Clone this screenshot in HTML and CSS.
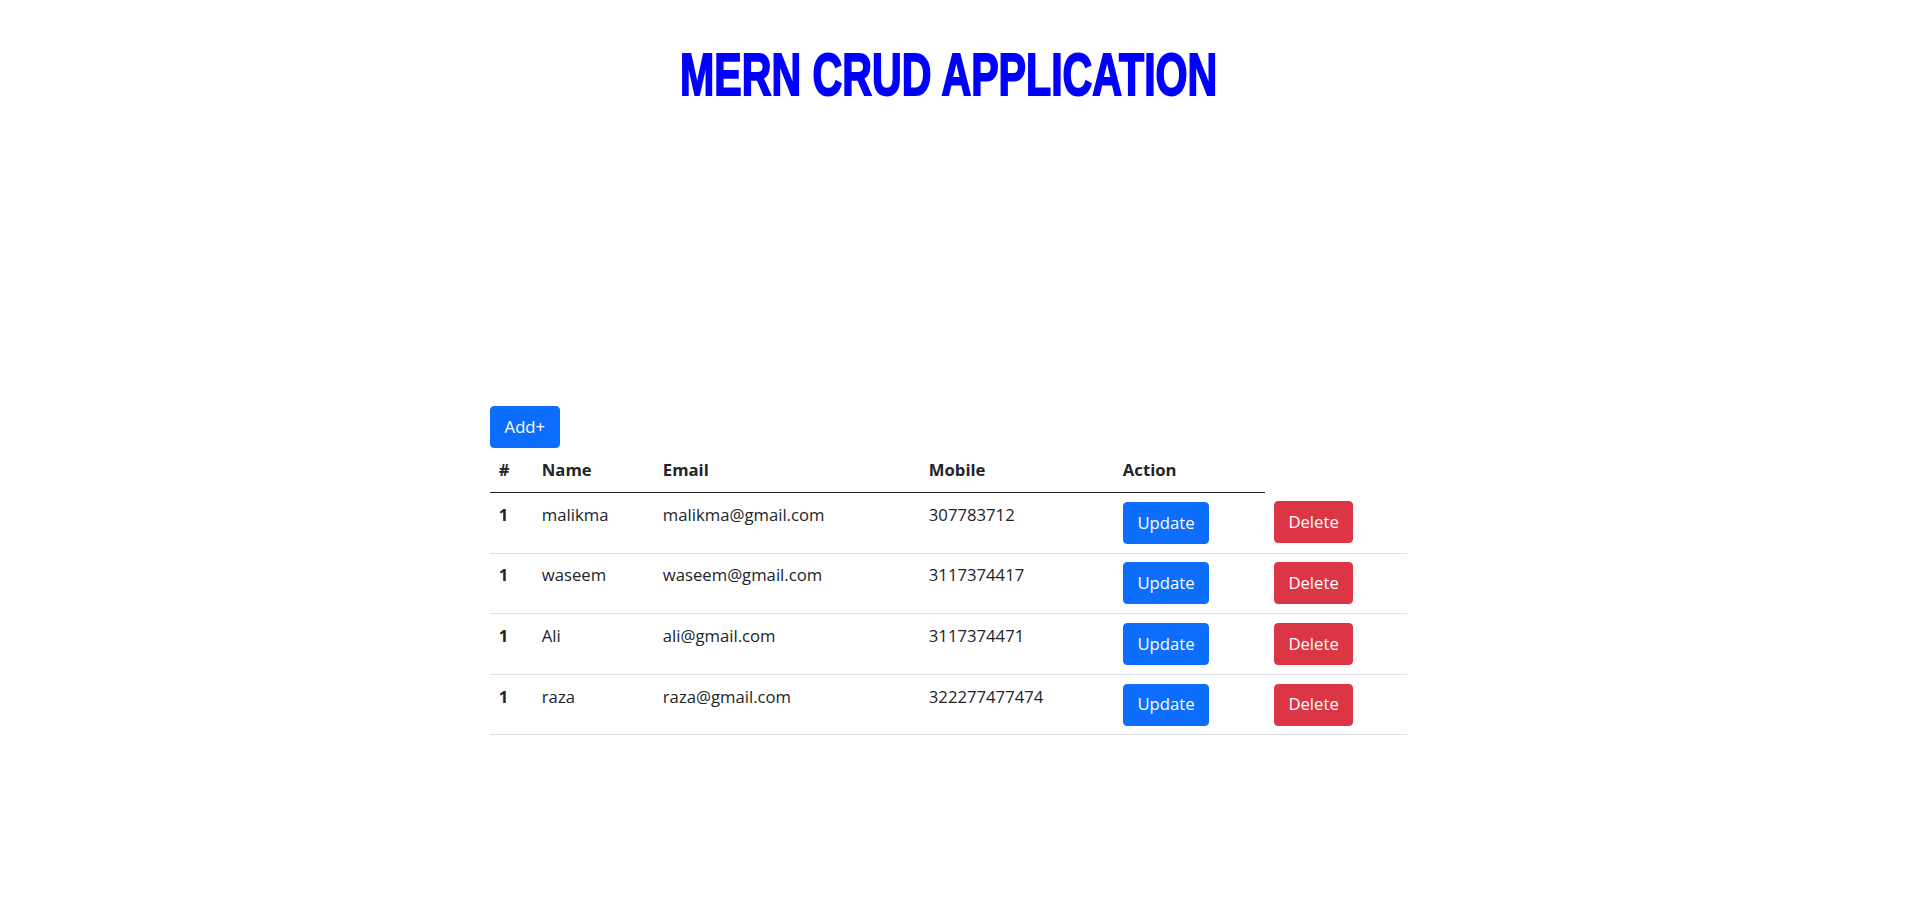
FILE: index.html
```html
<!DOCTYPE html>
<html lang="en">
<head>
<meta charset="utf-8">
<title>MERN CRUD</title>
<link rel="stylesheet" href="styles.css">
</head>
<body>
<div class="page">
  <header class="header">
    <h1 class="title"><span class="title-text">MERN CRUD APPLICATION</span></h1>
  </header>
  <main class="content">
    <button class="btn btn-primary">Add+</button>
    <table class="table">
      <colgroup>
        <col class="c-num"><col class="c-name"><col class="c-email"><col class="c-mobile"><col class="c-action"><col class="c-delete">
      </colgroup>
      <thead>
        <tr><th>#</th><th>Name</th><th>Email</th><th>Mobile</th><th>Action</th></tr>
      </thead>
      <tbody>
        <tr><th>1</th><td>malikma</td><td>malikma@gmail.com</td><td>307783712</td><td><button class="btn btn-primary">Update</button></td><td><button class="btn btn-danger">Delete</button></td></tr>
        <tr><th>1</th><td>waseem</td><td>waseem@gmail.com</td><td>3117374417</td><td><button class="btn btn-primary">Update</button></td><td><button class="btn btn-danger">Delete</button></td></tr>
        <tr><th>1</th><td>Ali</td><td>ali@gmail.com</td><td>3117374471</td><td><button class="btn btn-primary">Update</button></td><td><button class="btn btn-danger">Delete</button></td></tr>
        <tr><th>1</th><td>raza</td><td>raza@gmail.com</td><td>322277477474</td><td><button class="btn btn-primary">Update</button></td><td><button class="btn btn-danger">Delete</button></td></tr>
      </tbody>
    </table>
  </main>
</div>
</body>
</html>
```

FILE: styles.css
```css
* { box-sizing: border-box; }

html, body {
  margin: 0;
  padding: 0;
  background: #fff;
}

body {
  font-family: "Open Sans", "Noto Sans", sans-serif;
  font-size: 16.7px;
  line-height: 26.4px;
  color: #212529;
}

/* right padding stands in for the classic scrollbar gutter */
.page {
  padding: 0 19px 289px 0;
}

.header {
  padding-top: 39px;
  text-align: center;
}

.title {
  margin: 0;
  font-family: "Liberation Sans", Arial, sans-serif;
  font-weight: 700;
  font-size: 60px;
  line-height: 72px;
  color: #0000ff;
}

.title-text {
  display: inline-block;
  transform: scaleX(0.686);
  -webkit-text-stroke: 2px #0000ff;
  white-space: nowrap;
}

.content {
  width: 917px;
  margin: 295px auto 0;
}

.btn {
  display: inline-block;
  font-family: inherit;
  font-size: 16.7px;
  line-height: 26.4px;
  padding: 6.8px 13.6px;
  border: 1px solid transparent;
  border-radius: 4px;
  color: #fff;
  cursor: pointer;
  vertical-align: top;
}

.btn-primary {
  background: #0d6efd;
  border-color: #0d6efd;
}

.btn-danger {
  background: #dc3545;
  border-color: #dc3545;
}

.table {
  width: 917px;
  border-collapse: collapse;
  table-layout: fixed;
  vertical-align: top;
}

.c-num { width: 43px; }
.c-name { width: 121px; }
.c-email { width: 266px; }
.c-mobile { width: 194px; }
.c-action { width: 151px; }
.c-delete { width: 142px; }

.table th,
.table td {
  padding: 8.8px;
  text-align: left;
  vertical-align: top;
}

.table th {
  font-weight: 700;
}

.table thead th {
  border-bottom: 1px solid #212529;
}

.table tbody th,
.table tbody td {
  border-bottom: 1px solid #dee2e6;
  font-weight: 400;
}

.table tbody th {
  font-weight: 700;
}
```
